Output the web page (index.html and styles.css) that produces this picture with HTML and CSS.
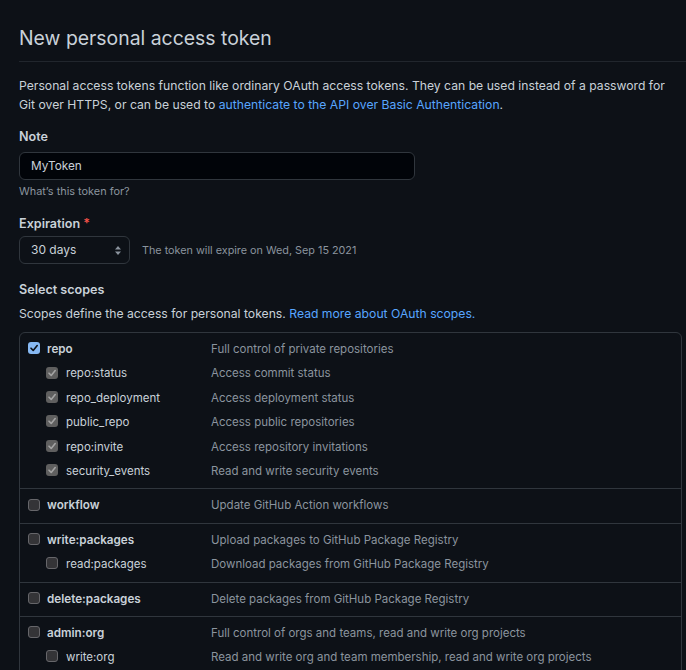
FILE: index.html
```html
<!DOCTYPE html>
<html>
<head>
<meta charset="utf-8">
<link rel="stylesheet" href="styles.css">
</head>
<body>
<div class="page">
  <div class="subhead">
    <h1 class="title">New personal access token</h1>
  </div>
  <p class="intro">Personal access tokens function like ordinary OAuth access tokens. They can be used instead of a password for Git over HTTPS, or can be used to <a class="link" href="#">authenticate to the API over Basic Authentication</a>.</p>

  <div class="field">
    <div class="label">Note</div>
    <div class="input">MyToken</div>
    <div class="note">What’s this token for?</div>
  </div>

  <div class="field field-exp">
    <div class="label">Expiration <span class="req">*</span></div>
    <div class="exp-row">
      <div class="select">30 days
        <svg class="updown" width="8" height="11" viewBox="0 0 8 11"><path d="M4 1 L7 4.5 H1 Z M4 10 L7 6.5 H1 Z" fill="#8b949e"/></svg>
      </div>
      <span class="exp-text">The token will expire on Wed, Sep 15 2021</span>
    </div>
  </div>

  <div class="label scopes-title">Select scopes</div>
  <p class="scopes-desc">Scopes define the access for personal tokens. <a class="link" href="#">Read more about OAuth scopes.</a></p>

  <div class="scopes">
    <div class="group">
      <div class="row"><div class="name top"><span class="cb cb-on"><svg width="10" height="10" viewBox="0 0 10 10"><path d="M2 5.2 L4.2 7.4 L8.2 2.6" fill="none" stroke="#0d1117" stroke-width="1.6" stroke-linecap="round" stroke-linejoin="round"/></svg></span><b>repo</b></div><div class="desc">Full control of private repositories</div></div>
      <div class="row"><div class="name sub"><span class="cb cb-dis"><svg width="10" height="10" viewBox="0 0 10 10"><path d="M2 5.2 L4.2 7.4 L8.2 2.6" fill="none" stroke="#a4a4a4" stroke-width="1.6" stroke-linecap="round" stroke-linejoin="round"/></svg></span>repo:status</div><div class="desc">Access commit status</div></div>
      <div class="row"><div class="name sub"><span class="cb cb-dis"><svg width="10" height="10" viewBox="0 0 10 10"><path d="M2 5.2 L4.2 7.4 L8.2 2.6" fill="none" stroke="#a4a4a4" stroke-width="1.6" stroke-linecap="round" stroke-linejoin="round"/></svg></span>repo_deployment</div><div class="desc">Access deployment status</div></div>
      <div class="row"><div class="name sub"><span class="cb cb-dis"><svg width="10" height="10" viewBox="0 0 10 10"><path d="M2 5.2 L4.2 7.4 L8.2 2.6" fill="none" stroke="#a4a4a4" stroke-width="1.6" stroke-linecap="round" stroke-linejoin="round"/></svg></span>public_repo</div><div class="desc">Access public repositories</div></div>
      <div class="row"><div class="name sub"><span class="cb cb-dis"><svg width="10" height="10" viewBox="0 0 10 10"><path d="M2 5.2 L4.2 7.4 L8.2 2.6" fill="none" stroke="#a4a4a4" stroke-width="1.6" stroke-linecap="round" stroke-linejoin="round"/></svg></span>repo:invite</div><div class="desc">Access repository invitations</div></div>
      <div class="row"><div class="name sub"><span class="cb cb-dis"><svg width="10" height="10" viewBox="0 0 10 10"><path d="M2 5.2 L4.2 7.4 L8.2 2.6" fill="none" stroke="#a4a4a4" stroke-width="1.6" stroke-linecap="round" stroke-linejoin="round"/></svg></span>security_events</div><div class="desc">Read and write security events</div></div>
    </div>
    <div class="group">
      <div class="row"><div class="name top"><span class="cb cb-off"></span><b>workflow</b></div><div class="desc">Update GitHub Action workflows</div></div>
    </div>
    <div class="group">
      <div class="row"><div class="name top"><span class="cb cb-off"></span><b>write:packages</b></div><div class="desc">Upload packages to GitHub Package Registry</div></div>
      <div class="row"><div class="name sub"><span class="cb cb-off"></span>read:packages</div><div class="desc">Download packages from GitHub Package Registry</div></div>
    </div>
    <div class="group">
      <div class="row"><div class="name top"><span class="cb cb-off"></span><b>delete:packages</b></div><div class="desc">Delete packages from GitHub Package Registry</div></div>
    </div>
    <div class="group">
      <div class="row"><div class="name top"><span class="cb cb-off"></span><b>admin:org</b></div><div class="desc">Full control of orgs and teams, read and write org projects</div></div>
      <div class="row"><div class="name sub"><span class="cb cb-off"></span>write:org</div><div class="desc">Read and write org and team membership, read and write org projects</div></div>
    </div>
  </div>
</div>
</body>
</html>
```

FILE: styles.css
```css
html, body {
  margin: 0;
  padding: 0;
  background: #0d1117;
  overflow: hidden;
}
body {
  font-family: Inter, "Liberation Sans", sans-serif;
  color: #c9d1d9;
  font-size: 12.2px;
}
.page {
  padding-left: 19px;
}
.subhead {
  border-bottom: 1px solid #21262d;
  padding-top: 24px;
  padding-bottom: 9px;
}
.title {
  margin: 0;
  font-size: 19.4px;
  font-weight: 400;
  line-height: 28px;
  color: #c9d1d9;
}
.intro {
  margin: 14px 0 0;
  line-height: 19px;
  width: 660px;
}
.link {
  color: #58a6ff;
  text-decoration: none;
}
.field {
  margin-top: 13px;
}
.label {
  font-weight: 600;
  font-size: 12.6px;
  line-height: 20px;
}
.req {
  color: #f85149;
}
.input {
  margin-top: 5px;
  width: 372px;
  height: 26px;
  border: 1px solid #30363d;
  border-radius: 6px;
  background: #010409;
  padding: 0 11px;
  line-height: 26px;
  font-size: 11.8px;
}
.note {
  font-size: 10.9px;
  color: #8b949e;
  margin-top: 4px;
  line-height: 14px;
}
.field-exp {
  margin-top: 16px;
}
.exp-row {
  display: flex;
  align-items: center;
  margin-top: 2px;
}
.select {
  position: relative;
  width: 87px;
  height: 26px;
  border: 1px solid #30363d;
  border-radius: 6px;
  background: #0d1117;
  padding: 0 11px;
  line-height: 26px;
  font-size: 12px;
}
.updown {
  position: absolute;
  right: 7px;
  top: 8px;
}
.exp-text {
  margin-left: 12px;
  color: #8b949e;
  font-size: 10.8px;
}
.scopes-title {
  margin-top: 16px;
}
.scopes-desc {
  margin: 4px 0 0;
  line-height: 20px;
}
.scopes {
  margin-top: 8px;
  width: 661px;
  border: 1px solid #30363d;
  border-radius: 6px;
  font-size: 11.5px;
}
.group {
  padding: 4px 0 5px;
  border-top: 1px solid #30363d;
}
.group:first-child {
  border-top: none;
}
.row {
  display: flex;
  line-height: 24.4px;
  height: 24.4px;
}
.name {
  display: flex;
  align-items: center;
  flex: none;
}
.name.top {
  padding-left: 8px;
  width: 183px;
}
.name.sub {
  padding-left: 26px;
  width: 165px;
}
.name b {
  font-weight: 600;
  font-size: 11.7px;
}
.cb {
  width: 12px;
  height: 12px;
  border-radius: 3px;
  box-sizing: border-box;
  display: inline-flex;
  align-items: center;
  justify-content: center;
  margin-right: 7px;
  margin-top: -2px;
  flex: none;
}
.name.sub .cb {
  margin-right: 8px;
}
.cb-on {
  background: #87b9f3;
}
.cb-dis {
  background: #5f5f5f;
}
.cb-off {
  background: #343437;
  border: 1px solid #66666a;
}
.desc {
  color: #8b949e;
}
```
